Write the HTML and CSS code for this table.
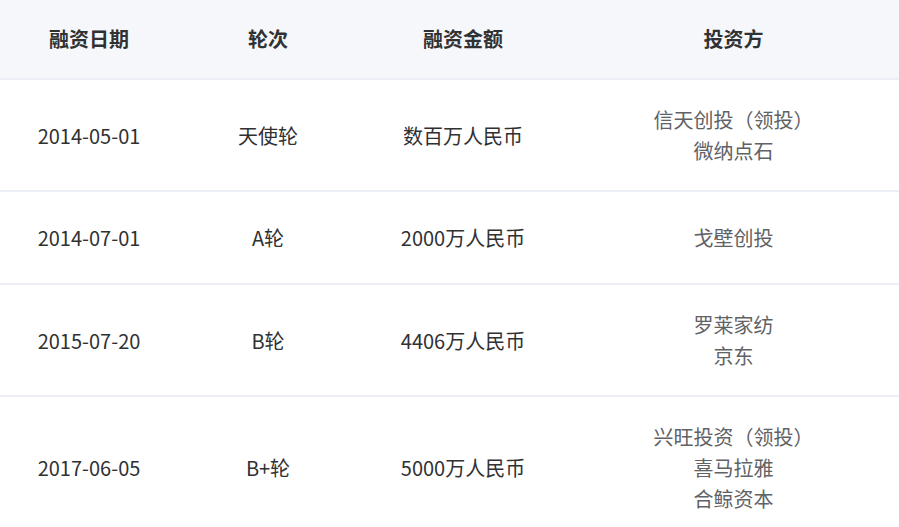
FILE: index.html
```html
<!DOCTYPE html>
<html lang="zh-CN">
<head>
<meta charset="utf-8">
<link rel="stylesheet" href="styles.css">
</head>
<body>
<table class="fin">
  <colgroup>
    <col class="c1"><col class="c2"><col class="c3"><col class="c4">
  </colgroup>
  <thead>
    <tr><th>融资日期</th><th>轮次</th><th>融资金额</th><th>投资方</th></tr>
  </thead>
  <tbody>
    <tr><td>2014-05-01</td><td>天使轮</td><td>数百万人民币</td><td class="inv"><div>信天创投（领投）</div><div>微纳点石</div></td></tr>
    <tr><td>2014-07-01</td><td>A轮</td><td>2000万人民币</td><td class="inv"><div>戈壁创投</div></td></tr>
    <tr><td>2015-07-20</td><td>B轮</td><td>4406万人民币</td><td class="inv"><div>罗莱家纺</div><div>京东</div></td></tr>
    <tr><td>2017-06-05</td><td>B+轮</td><td>5000万人民币</td><td class="inv"><div>兴旺投资（领投）</div><div>喜马拉雅</div><div>合鲸资本</div></td></tr>
  </tbody>
</table>
</body>
</html>
```
FILE: styles.css
```css
html, body {
  margin: 0;
  padding: 0;
  background: #ffffff;
}
body {
  font-family: "Noto Sans CJK SC", "Noto Sans", sans-serif;
  font-size: 20px;
  color: #303133;
  overflow: hidden;
}
.fin {
  width: 899px;
  border-collapse: collapse;
  table-layout: fixed;
}
.c1 { width: 178px; }
.c2 { width: 180px; }
.c3 { width: 210px; }
.c4 { width: 331px; }
.fin th {
  height: 78px;
  padding: 0;
  background: #f5f7fa;
  font-weight: 700;
  color: #303133;
  text-align: center;
  border-bottom: 2px solid #ebeef5;
  line-height: 30px;
}
.fin td {
  height: 43px;
  padding: 24px 0 24px;
  text-align: center;
  vertical-align: middle;
  line-height: 31px;
  border-bottom: 2px solid #ebeef5;
}
.fin td.inv {
  color: #606266;
}
```
